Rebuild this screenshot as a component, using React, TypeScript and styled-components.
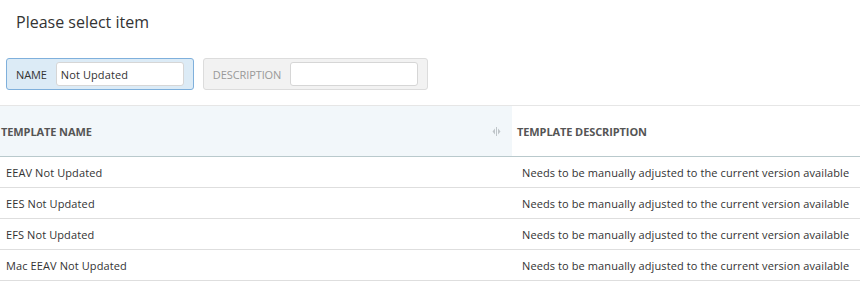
import React from 'react';
import styled, { createGlobalStyle } from 'styled-components';

const GlobalStyle = createGlobalStyle`
  body {
    margin: 0;
    background: #fff;
    font-family: "Open Sans", "Noto Sans", sans-serif;
    color: #333;
  }
`;

const rows = [
  { name: 'EEAV Not Updated', description: 'Needs to be manually adjusted to the current version available' },
  { name: 'EES Not Updated', description: 'Needs to be manually adjusted to the current version available' },
  { name: 'EFS Not Updated', description: 'Needs to be manually adjusted to the current version available' },
  { name: 'Mac EEAV Not Updated', description: 'Needs to be manually adjusted to the current version available' },
];

const App: React.FC = () => {
  return (
    <Page>
      <GlobalStyle />
      <Title>Please select item</Title>
      <Filters>
        <Filter active>
          <FilterLabel active>NAME</FilterLabel>
          <FilterInput defaultValue="Not Updated" />
        </Filter>
        <Filter>
          <FilterLabel>DESCRIPTION</FilterLabel>
          <FilterInput defaultValue="" />
        </Filter>
      </Filters>
      <Table>
        <thead>
          <tr>
            <HeadCell sorted>
              <HeadInner>
                TEMPLATE NAME
                <Grip>
                  <svg width="9" height="9" viewBox="0 0 9 9">
                    <path d="M3 1.5 L0.5 4.5 L3 7.5 Z" fill="#bfc5c9" />
                    <rect x="4" y="0" width="1" height="9" fill="#bfc5c9" />
                    <path d="M6 1.5 L8.5 4.5 L6 7.5 Z" fill="#bfc5c9" />
                  </svg>
                </Grip>
              </HeadInner>
            </HeadCell>
            <HeadCell>TEMPLATE DESCRIPTION</HeadCell>
          </tr>
        </thead>
        <tbody>
          {rows.map((r) => (
            <tr key={r.name}>
              <Cell>{r.name}</Cell>
              <Cell wide>{r.description}</Cell>
            </tr>
          ))}
        </tbody>
      </Table>
    </Page>
  );
};

const Page = styled.div`
  width: 860px;
`;

const Title = styled.h1`
  margin: 0;
  padding: 10px 16px 0;
  height: 24px;
  font-size: 16px;
  font-weight: 400;
  color: #333;
  line-height: 24px;
`;

const Filters = styled.div`
  display: flex;
  gap: 9px;
  padding: 24px 6px 0;
`;

const Filter = styled.div<{ active?: boolean }>`
  display: flex;
  align-items: center;
  height: 30px;
  padding: 0 9px 0 9px;
  gap: 9px;
  border-radius: 3px;
  border: 1px solid ${({ active }) => (active ? '#7fb0dc' : '#dcdcdc')};
  background: ${({ active }) => (active ? '#dcebf6' : '#f2f2f2')};
`;

const FilterLabel = styled.span<{ active?: boolean }>`
  font-size: 11px;
  letter-spacing: -0.1px;
  color: ${({ active }) => (active ? '#333' : '#999')};
`;

const FilterInput = styled.input`
  box-sizing: border-box;
  width: 128px;
  height: 24px;
  border: 1px solid #d6d6d6;
  border-radius: 3px;
  background: #fff;
  padding: 0 4px;
  font-family: inherit;
  font-size: 11px;
  letter-spacing: 0.1px;
  color: #333;
  outline: none;
`;

const Table = styled.table`
  margin-top: 15px;
  width: 100%;
  border-collapse: collapse;
  border-top: 1px solid #e6e6e6;
`;

const HeadCell = styled.th<{ sorted?: boolean }>`
  height: 50px;
  padding: 0 0 0 ${({ sorted }) => (sorted ? '1px' : '5px')};
  width: ${({ sorted }) => (sorted ? '511px' : 'auto')};
  text-align: left;
  font-size: 11px;
  font-weight: 700;
  letter-spacing: -0.1px;
  color: #555;
  background: ${({ sorted }) => (sorted ? '#f2f7fa' : '#fff')};
  border-bottom: 1px solid #b9c9cc;
`;

const HeadInner = styled.div`
  display: flex;
  align-items: center;
  justify-content: space-between;
  padding-right: 11px;
`;

const Grip = styled.span`
  display: flex;
`;

const Cell = styled.td<{ wide?: boolean }>`
  height: 30px;
  padding: 0 0 0 ${({ wide }) => (wide ? '10px' : '6px')};
  font-size: 11px;
  letter-spacing: 0.1px;
  color: #333;
  border-bottom: 1px solid #dedede;
`;

export default App;
